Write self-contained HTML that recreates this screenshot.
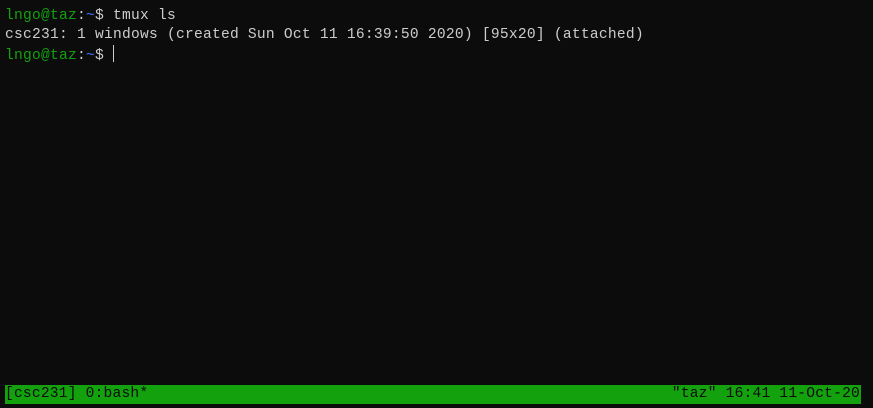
<!DOCTYPE html>
<html><head><style>
html,body{margin:0;padding:0;background:#0c0c0c;width:873px;height:408px;overflow:hidden}
body{font-family:"Liberation Mono",monospace;font-size:14.6px;color:#cccccc;position:relative;letter-spacing:0.24px}
.l{position:absolute;left:5px;white-space:pre;line-height:19px;height:19px}
.g{color:#13a10e}.b{color:#3b78ff}
.cur{display:inline-block;width:1px;height:17px;background:#ccc;vertical-align:-3px}
.bar{position:absolute;left:5px;top:385px;width:856px;height:19px;background:#13a10e;color:#0c0c0c;line-height:19px;white-space:pre;letter-spacing:0.2px}
.r{position:absolute;right:1px;top:0}
</style></head><body>
<div class="l" style="top:7px"><span class="g">lngo@taz</span>:<span class="b">~</span>$ tmux ls</div>
<div class="l" style="top:26px">csc231: 1 windows (created Sun Oct 11 16:39:50 2020) [95x20] (attached)</div>
<div class="l" style="top:45px"><span class="g">lngo@taz</span>:<span class="b">~</span>$ <span class="cur"></span></div>
<div class="bar">[csc231] 0:bash*<span class="r">"taz" 16:41 11-Oct-20</span></div>
</body></html>
